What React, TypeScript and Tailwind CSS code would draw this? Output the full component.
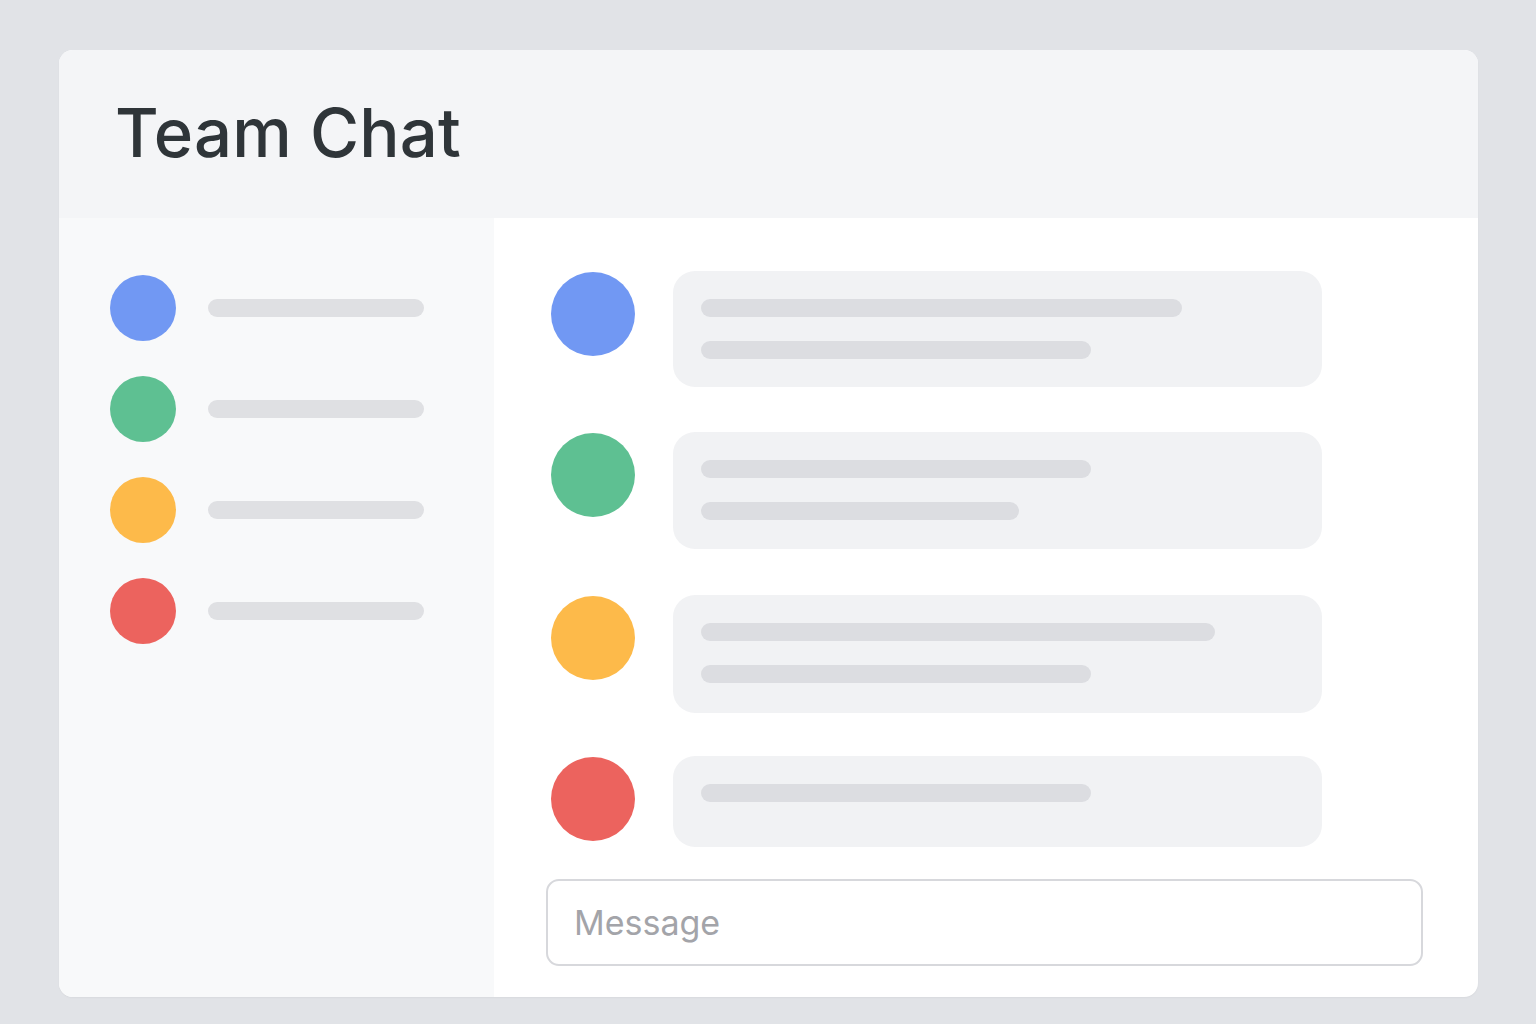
const contacts = ["bg-[#7198f3]", "bg-[#5ec092]", "bg-[#fdba4a]", "bg-[#ec635e]"];

const messages = [
  { color: "bg-[#7198f3]", lines: ["w-[481px]", "w-[390px]"], h: "h-[116px]", gap: "" },
  { color: "bg-[#5ec092]", lines: ["w-[390px]", "w-[318px]"], h: "h-[117px]", gap: "mt-[45px]" },
  { color: "bg-[#fdba4a]", lines: ["w-[514px]", "w-[390px]"], h: "h-[118px]", gap: "mt-[46px]" },
  { color: "bg-[#ec635e]", lines: ["w-[390px]"], h: "h-[91px]", gap: "mt-[43px]" },
];

const App = () => {
  return (
    <div
      className="min-h-screen w-full bg-[#e1e3e7] pt-[50px] pl-[59px]"
      style={{ fontFamily: "Inter, 'Liberation Sans', sans-serif" }}
    >
      <div className="w-[1419px] h-[947px] bg-white rounded-[14px] overflow-hidden flex flex-col shadow-[0_1px_2px_rgba(0,0,0,0.04)]">
        {/* Header */}
        <div className="h-[168px] shrink-0 bg-[#f4f5f7] flex items-center pl-[56px]">
          <h1 className="text-[67px] font-medium text-[#2f3539] tracking-[0.2px] leading-none mt-[-3px]">
            Team Chat
          </h1>
        </div>

        <div className="flex flex-1 min-h-0">
          {/* Contacts */}
          <div className="w-[435px] shrink-0 bg-[#f8f9fa] pt-[57px] pl-[51px] flex flex-col gap-[35px]">
            {contacts.map((c, i) => (
              <div key={i} className="flex items-center">
                <div className={`w-[66px] h-[66px] rounded-full ${c}`}></div>
                <div className="ml-[32px] w-[216px] h-[18px] rounded-full bg-[#dfe0e3]"></div>
              </div>
            ))}
          </div>

          {/* Messages */}
          <div className="flex-1 flex flex-col pl-[52px] pt-[53px]">
            {messages.map((m, i) => (
              <div key={i} className={`flex items-start shrink-0 ${m.gap}`}>
                <div className={`w-[84px] h-[84px] rounded-full mt-[1px] ml-[5px] ${m.color}`}></div>
                <div className={`ml-[38px] w-[649px] ${m.h} rounded-[22px] bg-[#f1f2f4] pl-[28px] pt-[28px] flex flex-col gap-[24px]`}>
                  {m.lines.map((w, j) => (
                    <div key={j} className={`${w} h-[18px] rounded-full bg-[#dcdde1]`}></div>
                  ))}
                </div>
              </div>
            ))}

            <div className="mt-[32px] shrink-0 w-[877px] h-[87px] rounded-[13px] border-2 border-[#d7d8dc] bg-white flex items-center pl-[26px]">
              <span className="text-[34px] text-[#a3a4a9] leading-none">Message</span>
            </div>
          </div>
        </div>
      </div>
    </div>
  );
};

export default App;
